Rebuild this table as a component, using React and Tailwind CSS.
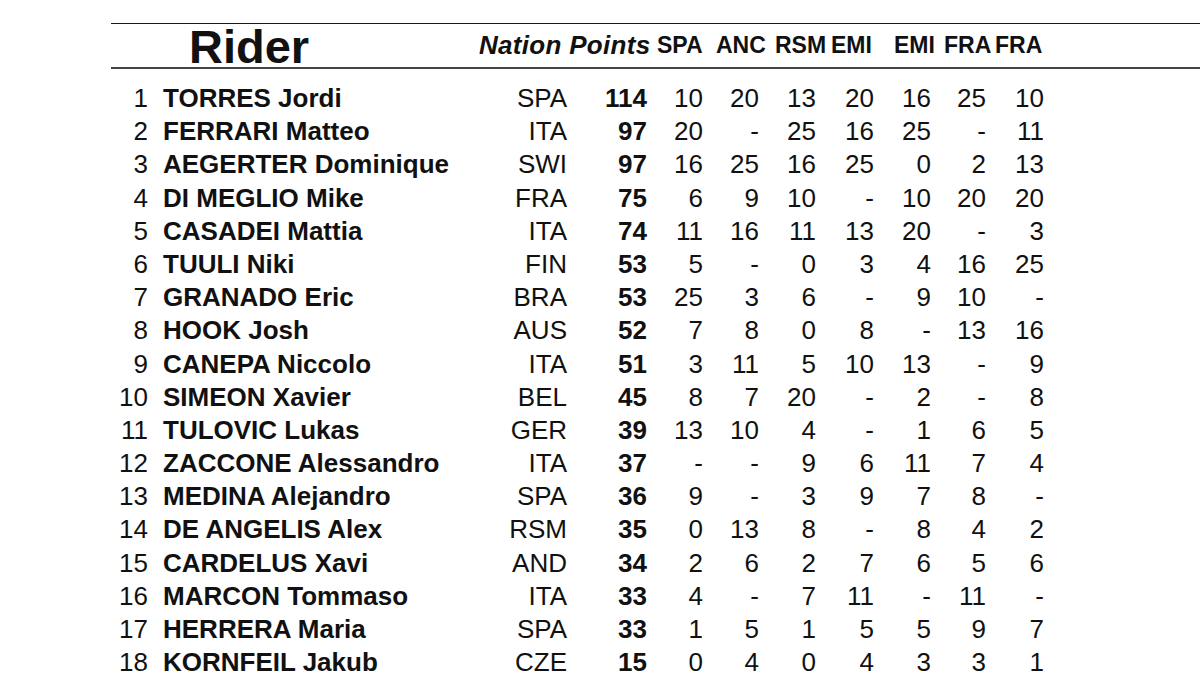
import React from "react";

const rows = [
  [1, "TORRES Jordi", "SPA", 114, ["10", "20", "13", "20", "16", "25", "10"]],
  [2, "FERRARI Matteo", "ITA", 97, ["20", "-", "25", "16", "25", "-", "11"]],
  [3, "AEGERTER Dominique", "SWI", 97, ["16", "25", "16", "25", "0", "2", "13"]],
  [4, "DI MEGLIO Mike", "FRA", 75, ["6", "9", "10", "-", "10", "20", "20"]],
  [5, "CASADEI Mattia", "ITA", 74, ["11", "16", "11", "13", "20", "-", "3"]],
  [6, "TUULI Niki", "FIN", 53, ["5", "-", "0", "3", "4", "16", "25"]],
  [7, "GRANADO Eric", "BRA", 53, ["25", "3", "6", "-", "9", "10", "-"]],
  [8, "HOOK Josh", "AUS", 52, ["7", "8", "0", "8", "-", "13", "16"]],
  [9, "CANEPA Niccolo", "ITA", 51, ["3", "11", "5", "10", "13", "-", "9"]],
  [10, "SIMEON Xavier", "BEL", 45, ["8", "7", "20", "-", "2", "-", "8"]],
  [11, "TULOVIC Lukas", "GER", 39, ["13", "10", "4", "-", "1", "6", "5"]],
  [12, "ZACCONE Alessandro", "ITA", 37, ["-", "-", "9", "6", "11", "7", "4"]],
  [13, "MEDINA Alejandro", "SPA", 36, ["9", "-", "3", "9", "7", "8", "-"]],
  [14, "DE ANGELIS Alex", "RSM", 35, ["0", "13", "8", "-", "8", "4", "2"]],
  [15, "CARDELUS Xavi", "AND", 34, ["2", "6", "2", "7", "6", "5", "6"]],
  [16, "MARCON Tommaso", "ITA", 33, ["4", "-", "7", "11", "-", "11", "-"]],
  [17, "HERRERA Maria", "SPA", 33, ["1", "5", "1", "5", "5", "9", "7"]],
  [18, "KORNFEIL Jakub", "CZE", 15, ["0", "4", "0", "4", "3", "3", "1"]],
];

const races = ["SPA", "ANC", "RSM", "EMI", "EMI", "FRA", "FRA"];
const headerWidths = ["w-[59px]", "w-[59px]", "w-[56px]", "w-[63px]", "w-[50px]", "w-[51px]", "w-[60px]"];

export default function App() {
  return (
    <div
      className="w-[1200px] h-[690px] bg-white text-[#111] overflow-hidden pt-[23px]"
      style={{ fontFamily: '"Liberation Sans", Arial, sans-serif' }}
    >
      <div className="ml-[111px]">
        {/* header */}
        <div className="flex items-start h-[46px] border-t border-[#1a1a1a] border-b-2 border-b-[#444]">
          <div className="w-[368px] pl-[78px] mt-[-1px] text-[47px] leading-none font-bold">Rider</div>
          <div className="w-[178px] mt-[8px] text-[26px] leading-none font-bold italic whitespace-nowrap tracking-[0.3px]">
            Nation Points
          </div>
          {races.map((r, i) => (
            <div key={i} className={`${headerWidths[i]} mt-[10px] text-[23px] leading-none font-bold whitespace-nowrap`}>
              {r}
            </div>
          ))}
        </div>
        {/* rows */}
        <div className="pt-[13px]">
          {rows.map(([rank, name, nat, pts, sc]) => (
            <div
              key={rank}
              className="grid grid-cols-[37px_352px_67px_80px_56px_56px_57px_58px_57px_55px_58px] h-[33.2px] leading-[33.2px] text-[26px] whitespace-nowrap"
            >
              <div className="text-right">{rank}</div>
              <div className="pl-[15px] font-bold">{name}</div>
              <div className="text-right">{nat}</div>
              <div className="text-right font-bold">{pts}</div>
              {sc.map((v, j) => (
                <div key={j} className="text-right">
                  {v}
                </div>
              ))}
            </div>
          ))}
        </div>
      </div>
    </div>
  );
}
